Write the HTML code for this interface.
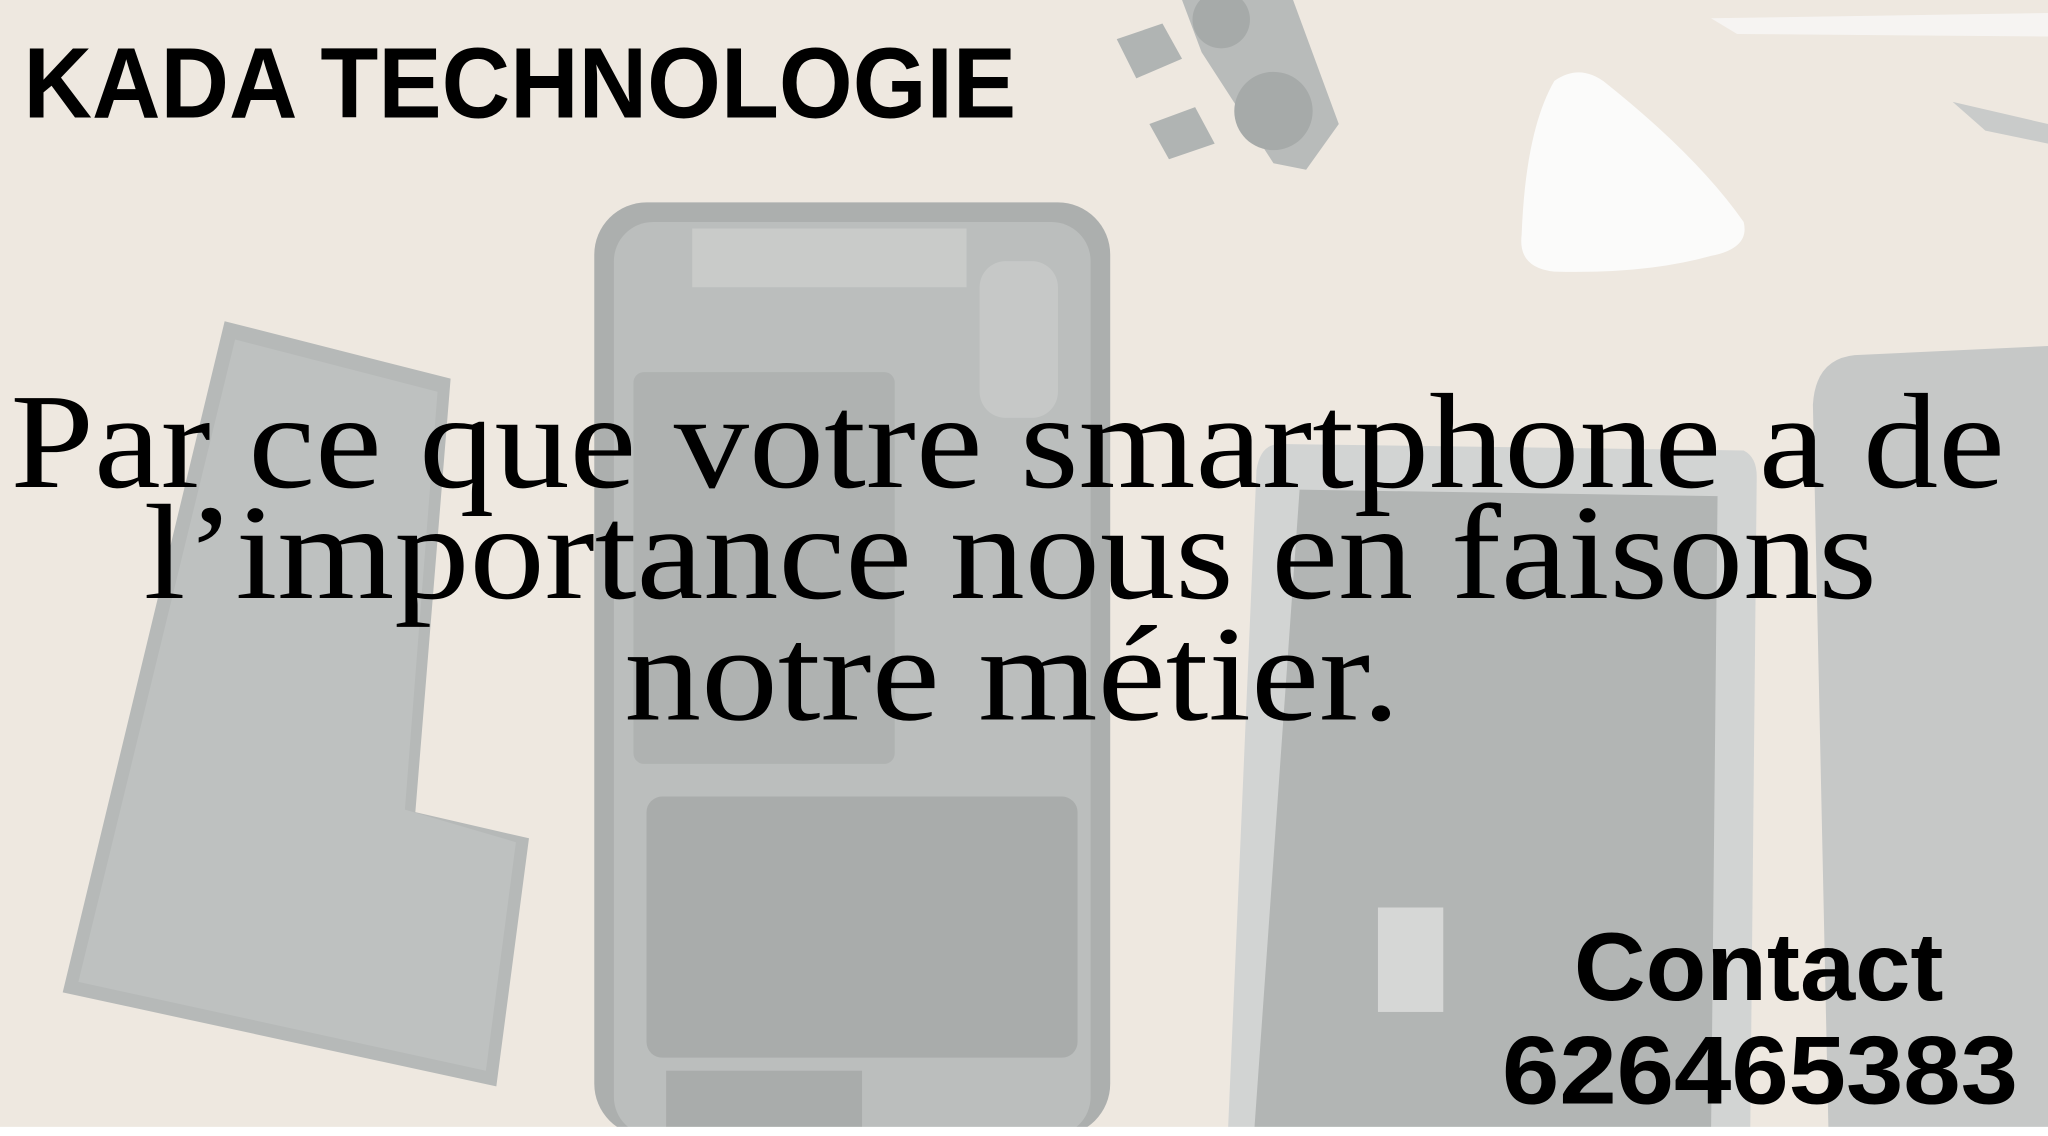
<!DOCTYPE html>
<html><head><meta charset="utf-8"><style>
html,body{margin:0;padding:0;width:2048px;height:1136px;overflow:hidden;background:#efe9e2}
svg{display:block}
</style></head><body>
<svg width="2048" height="1136" viewBox="0 0 1568 870" preserveAspectRatio="none" xmlns="http://www.w3.org/2000/svg">
<rect width="1568" height="870" fill="#eee8e0"/>
<path d="M1310 14 L1568 10 L1568 28 L1330 26 Z" fill="#f6f4f2"/>
<path d="M1495 78 L1568 95 L1568 110 L1520 100 Z" fill="#c9cbca"/>
<path d="M1190 62 Q1210 48 1230 64 Q1300 120 1335 170 Q1340 190 1310 196 Q1260 210 1190 208 Q1162 205 1165 180 Q1168 100 1190 62 Z" fill="#fbfbfa"/>
<path d="M905 0 L990 0 L1025 95 L1000 130 L975 125 L920 40 Z" fill="#b8bbba"/>
<circle cx="975" cy="85" r="30" fill="#a6aaa9"/>
<circle cx="935" cy="15" r="22" fill="#a6aaa9"/>
<path d="M855 30 L890 18 L905 45 L870 60 Z" fill="#b0b4b3"/>
<path d="M880 95 L915 82 L930 110 L895 122 Z" fill="#b0b4b3"/>
<path d="M172 246 L345 290 L318 622 L405 642 L380 832 L48 760 Z" fill="#b6b9b8"/>
<path d="M180 260 L335 300 L310 620 L395 645 L372 820 L60 752 Z" fill="#bec1c0"/>
<rect x="455" y="155" width="395" height="715" rx="40" fill="#acafae"/>
<rect x="470" y="170" width="365" height="700" rx="30" fill="#bbbebd"/>
<rect x="485" y="285" width="200" height="300" rx="8" fill="#afb2b1"/>
<rect x="495" y="610" width="330" height="200" rx="12" fill="#a9acab"/>
<rect x="510" y="820" width="150" height="45" fill="#a9acab"/>
<rect x="530" y="175" width="210" height="45" fill="#c9cbc9"/>
<rect x="750" y="200" width="60" height="120" rx="20" fill="#c6c8c7"/>
<path d="M980 340 L1335 345 Q1345 350 1345 365 L1340 870 L940 870 L962 360 Q965 340 980 340 Z" fill="#d2d4d3"/>
<path d="M995 375 L1315 380 L1310 870 L960 870 Z" fill="#b2b5b4"/>
<rect x="1055" y="695" width="50" height="80" fill="#d6d7d6"/>
<path d="M1420 272 L1568 265 L1568 870 L1400 870 L1388 310 Q1390 275 1420 272 Z" fill="#c6c8c7"/>
<rect x="0" y="863" width="1568" height="7" fill="#ffffff"/>
<text x="18" y="90" font-family="Liberation Sans, sans-serif" font-weight="bold" font-size="77" textLength="760" lengthAdjust="spacingAndGlyphs" fill="#000">KADA TECHNOLOGIE</text>
<g font-family="Liberation Serif, serif" font-size="104" fill="#000">
<text x="8" y="373" textLength="1527" lengthAdjust="spacingAndGlyphs">Par ce que votre smartphone a de</text>
<text x="110" y="458" textLength="1327" lengthAdjust="spacingAndGlyphs">l’importance nous en faisons</text>
<text x="478" y="551" textLength="594" lengthAdjust="spacingAndGlyphs">notre métier.</text>
</g>
<g font-family="Liberation Sans, sans-serif" font-weight="bold" fill="#000">
<text x="1205" y="766" font-size="74" textLength="283" lengthAdjust="spacingAndGlyphs">Contact</text>
<text x="1150" y="845" font-size="74" textLength="395" lengthAdjust="spacingAndGlyphs">626465383</text>
</g>
</svg>
</body></html>
